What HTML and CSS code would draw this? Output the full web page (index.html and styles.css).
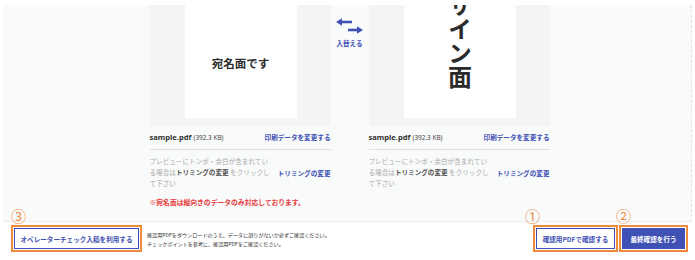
FILE: index.html
```html
<!DOCTYPE html>
<html lang="ja">
<head>
<meta charset="utf-8">
<link rel="stylesheet" href="styles.css">
</head>
<body>
<div class="stage">
  <div class="sides">
    <div class="side">
      <div class="card">
        <div class="preview"><span class="front-label">宛名面です</span></div>
      </div>
      <div class="file-row">
        <span class="fname">sample.pdf <small>(392.3 KB)</small></span>
        <a class="link">印刷データを変更する</a>
      </div>
      <div class="divider"></div>
      <div class="note-row">
        <p class="note">プレビューにトンボ・余白が含まれてい<br>る場合は<b>トリミングの変更</b> をクリックし<br>て下さい</p>
        <a class="link">トリミングの変更</a>
      </div>
      <p class="warn">※宛名面は縦向きのデータのみ対応しております。</p>
    </div>
    <div class="swap">
      <svg class="swap-icon" width="28" height="20" viewBox="0 0 28 20">
        <line x1="5" y1="6" x2="16" y2="6" stroke="#3f51b5" stroke-width="2.6"/>
        <polygon points="0,6 6,2.2 6,9.8" fill="#3f51b5"/>
        <line x1="12" y1="14" x2="22" y2="14" stroke="#3f51b5" stroke-width="2.6"/>
        <polygon points="27,14 21,10.2 21,17.8" fill="#3f51b5"/>
      </svg>
      <span class="swap-label">入替える</span>
    </div>
    <div class="side">
      <div class="card">
        <div class="preview"><span class="back-label">サイン面</span></div>
      </div>
      <div class="file-row">
        <span class="fname">sample.pdf <small>(392.3 KB)</small></span>
        <a class="link">印刷データを変更する</a>
      </div>
      <div class="divider"></div>
      <div class="note-row">
        <p class="note">プレビューにトンボ・余白が含まれてい<br>る場合は<b>トリミングの変更</b> をクリックし<br>て下さい</p>
        <a class="link">トリミングの変更</a>
      </div>
    </div>
  </div>
</div>
<div class="actions">
  <div class="marked">
    <span class="badge badge-3">③</span>
    <button class="btn btn-outline btn-operator">オペレーターチェック入稿を利用する</button>
  </div>
  <p class="hint">確認用PDFをダウンロードのうえ、データに誤りがないか必ずご確認ください。<br>チェックポイントを参考に、確認用PDFをご確認ください。</p>
  <div class="right-group">
    <div class="marked">
      <span class="badge badge-1">①</span>
      <button class="btn btn-outline btn-pdf">確認用PDFで確認する</button>
    </div>
    <div class="marked">
      <span class="badge badge-2">②</span>
      <button class="btn btn-fill btn-final">最終確認を行う</button>
    </div>
  </div>
</div>
</body>
</html>
```

FILE: styles.css
```css
* { box-sizing: border-box; }
html, body { margin: 0; padding: 0; background: #fff; }
body {
  width: 695px;
  height: 260px;
  overflow: hidden;
  font-family: "Noto Sans", "Noto Sans CJK JP", sans-serif;
  color: #333;
}
p { margin: 0; }
a { text-decoration: none; }

.stage {
  margin: 5px 3px 0 3px;
  height: 217px;
  background: #f9fafa;
  border-bottom: 1px solid #eceeee;
  border-right: 1px dashed #e2e4e4;
}
.sides {
  display: flex;
  justify-content: center;
  padding-left: 5px;
}
.side { width: 181px; }
.card {
  background: #f3f4f4;
  height: 121px;
  padding-left: 35px;
}
.preview {
  width: 112px;
  height: 113px;
  background: #fff;
  overflow: hidden;
  display: flex;
  justify-content: center;
}
.front-label {
  margin-top: 51px;
  font-family: "Noto Sans CJK JP", sans-serif;
  font-weight: 700;
  font-size: 11.5px;
  line-height: 14px;
  color: #2b2b2b;
}
.back-label {
  writing-mode: vertical-rl;
  margin-top: -12px;
  font-family: "Noto Sans CJK JP", sans-serif;
  font-weight: 700;
  font-size: 24px;
  line-height: 24px;
  color: #2b2b2b;
}
.file-row {
  display: flex;
  justify-content: space-between;
  align-items: baseline;
  margin-top: 6px;
  height: 11px;
  line-height: 11px;
}
.fname {
  font-weight: 700;
  font-size: 7.6px;
  color: #333;
}
.fname small {
  font-weight: 400;
  font-size: 6.4px;
  color: #444;
}
.link {
  font-family: "Noto Sans CJK JP", sans-serif;
  font-weight: 700;
  font-size: 6.6px;
  color: #3f51b5;
}
.divider {
  margin-top: 6px;
  height: 1px;
  background: #dfe1e1;
}
.note-row {
  margin-top: 6px;
  display: flex;
  justify-content: space-between;
  align-items: center;
}
.note {
  font-family: "Noto Sans CJK JP", sans-serif;
  font-size: 6.6px;
  line-height: 11px;
  color: #a9abab;
  white-space: nowrap;
}
.note b { color: #555; font-weight: 700; }
.warn {
  margin-top: 8px;
  font-family: "Noto Sans CJK JP", sans-serif;
  font-weight: 700;
  font-size: 6.8px;
  line-height: 10px;
  color: #e83a3a;
}
.swap {
  width: 38px;
  display: flex;
  flex-direction: column;
  align-items: center;
  padding-top: 11px;
}
.swap-icon { display: block; }
.swap-label {
  margin-top: 2px;
  font-family: "Noto Sans CJK JP", sans-serif;
  font-weight: 700;
  font-size: 6.5px;
  line-height: 10px;
  color: #3f51b5;
}

.actions {
  display: flex;
  align-items: center;
  padding: 6px 10px 0 14px;
}
.marked { position: relative; }
.badge {
  position: absolute;
  top: -20px;
  font-family: "Noto Sans CJK JP", sans-serif;
  font-size: 15px;
  line-height: 16px;
  color: #f08a3c;
}
.badge-3 { left: -3px; }
.badge-1 { left: -11px; }
.badge-2 { left: -6px; }
.btn {
  display: block;
  height: 21px;
  padding: 0;
  font-family: "Noto Sans CJK JP", sans-serif;
  font-weight: 700;
  font-size: 6.6px;
  border: 1.5px solid #3f51b5;
  outline: 2px solid #ef8a3c;
  outline-offset: 1px;
  border-radius: 0;
}
.btn-outline { background: #fff; color: #3f51b5; }
.btn-fill { background: #3f51b5; color: #fff; }
.btn-operator { width: 125px; }
.btn-pdf { width: 79px; }
.btn-final { width: 63px; }
.hint {
  margin-left: 8px;
  font-family: "Noto Sans CJK JP", sans-serif;
  font-size: 5.1px;
  line-height: 9px;
  color: #333;
  white-space: nowrap;
}
.right-group {
  margin-left: auto;
  display: flex;
  gap: 7px;
}
```
